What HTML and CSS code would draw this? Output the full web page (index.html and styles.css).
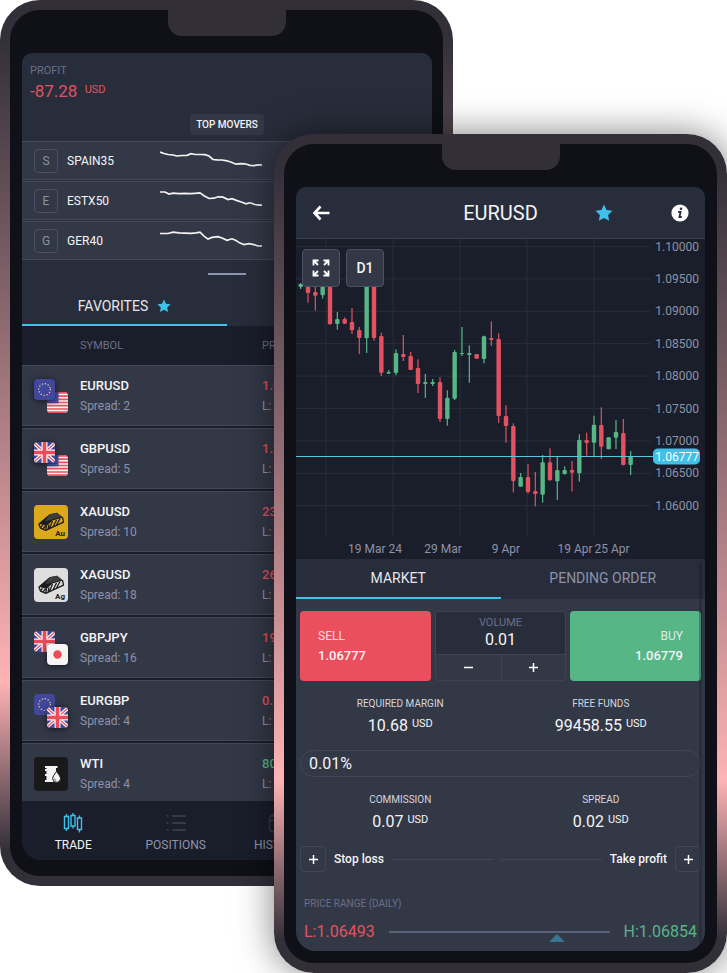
FILE: index.html
```html
<!DOCTYPE html>
<html lang="en">
<head>
<meta charset="utf-8">
<meta name="viewport" content="width=device-width, initial-scale=1">
<title>Mobile trading</title>
<link rel="stylesheet" href="styles.css">
</head>
<body>
<svg class="sprite" aria-hidden="true">
  <symbol id="star" viewBox="0 0 24 24"><path d="M12 .8l3.400 7.200 7.800 1-5.700 5.500 1.400 7.900L12 18.600l-6.900 3.800 1.400-7.900L.8 9l7.800-1z"/></symbol>
  <symbol id="eu" viewBox="0 0 21 21"><rect width="21" height="21" rx="4" fill="#41479b"/><circle cx="10.500" cy="10.500" r="5.800" fill="none" stroke="#e8d592" stroke-width="1.300" stroke-linecap="round" stroke-dasharray=".2 2.836"/></symbol>
  <symbol id="us" viewBox="0 0 21 21"><clipPath id="c-us"><rect width="21" height="21" rx="4"/></clipPath><g clip-path="url(#c-us)"><path fill="#f5f5f5" d="M0 0h21v21H0z"/><path stroke="#e9505e" stroke-width="1.700" d="M0 .8h21M0 4.050h21M0 7.300h21M0 10.500h21M0 13.700h21M0 17h21M0 20.200h21"/><path fill="#41479b" d="M0 0h11.500v11.300H0z"/><path stroke="#8a8ec8" stroke-width=".7" stroke-dasharray=".8 1.500" d="M1 2h10M2 4.500h9M1 7h10M2 9.500h9"/></g></symbol>
  <symbol id="uk" viewBox="0 0 21 21"><clipPath id="c-uk"><rect width="21" height="21" rx="4"/></clipPath><g clip-path="url(#c-uk)"><path fill="#41479b" d="M0 0h21v21H0z"/><path stroke="#f5f5f5" stroke-width="3.600" d="M0 1l21 19M21 1L0 20"/><path stroke="#ec4c5a" stroke-width="1.200" d="M0 1l21 19M21 1L0 20"/><path stroke="#f5f5f5" stroke-width="6" d="M10.500 0v21M0 10.500h21"/><path stroke="#ec4c5a" stroke-width="3.600" d="M10.500 0v21M0 10.500h21"/></g></symbol>
  <symbol id="jp" viewBox="0 0 21 21"><rect width="21" height="21" rx="4" fill="#f5f5f5"/><circle cx="10.500" cy="10.500" r="4.200" fill="#ec4c5a"/></symbol>
  <symbol id="ingot" viewBox="0 0 34 34"><path fill="#1c1c1c" d="M4.500 18.500L15.500 9.300l7.500-1.500 6 4.700-10.500 3-6 5.500z"/><path fill="#3d3d3d" d="M15.500 9.300l7.500-1.500 5 4-10 2.700-7 2z"/><path fill="none" stroke="#1c1c1c" stroke-width="1.300" stroke-linejoin="round" d="M4.800 18.500l1.700 4.700 5.200 2.200 17.800-8.200-1-5M12.500 20.500l-.8 4.900M6.500 23.200l2-3M9 24l2.500-3M15.500 23.500l3-7.500M19 22l3.500-7M22.500 20l3.500-6.500M14 24.500l1-5"/></symbol>
  <symbol id="barrel" viewBox="0 0 34 34"><rect width="34" height="34" rx="4" fill="#191919"/><path fill="#f3f3f3" d="M11 9h12.500v2H22v3h1l-3.500 5c-1.500 3 0 5.500 1.500 6H11v-2h1.500v-4H11v-2h1.500v-3H11v-2h1.500v-1H11z"/><path fill="#f3f3f3" stroke="#191919" stroke-width="1" d="M22.600 14.500c2.200 3 3.900 5 3.900 7a3.900 3.900 0 0 1-7.800 0c0-2 1.700-4 3.900-7z"/><path fill="none" stroke="#555" stroke-width=".8" d="M20.500 21.500a2.200 2.200 0 0 0 2 2.200"/></symbol>
</svg>

<main class="stage">
  <section class="phone phone-back" aria-label="Watchlist">
    <div class="body">
      <div class="notch"></div>
      <div class="screen">
        <header class="account">
          <p class="caption">PROFIT</p>
          <p class="profit">-87.28 <sup>USD</sup></p>
          <button class="movers-button" type="button">TOP MOVERS</button>
        </header>
        <ul class="movers">
          <li><span class="tile">S</span><span class="mover-name">SPAIN35</span><svg class="spark" viewBox="0 0 102 24"><path d="M0 3l4 1.500 4 1 5 .5 4 1 5-.5 5-.2 4-1.600 4 .8h6l4 .2 4 1.300 4 3.500 4 .3 5 .2 5 .8 5 1.700 4 1.700 4-.6 5 .2 5 1.500 4 .4 4-.8 5 .1"/></svg></li>
          <li><span class="tile">E</span><span class="mover-name">ESTX50</span><svg class="spark" viewBox="0 0 102 24"><path d="M0 3h5l4 2 4-.9 6 .6 6-.4 5 .3 5-.3 5-.4 4 2.800 5 2.800 5-.3 4-1.400 5 .4 5 2.400 4-1 5 2 5 1.700 4 1.500 4-1 5 1.700 4 .6h3"/></svg></li>
          <li><span class="tile">G</span><span class="mover-name">GER40</span><svg class="spark" viewBox="0 0 102 24"><path d="M0 4.500h8l5-1.300 6 .6 6 .3 6 .3 5-.5 4-.8 4 4 4 3 4-1.700 6-.7 4 1.300 5 2.300 5-1.500 4 1.700 4 2.600 4 1.500 5-1 5 1 4 1.400h4"/></svg></li>
        </ul>
        <div class="handle"></div>
        <nav class="tabs tabs-list">
          <button class="tab active" type="button">FAVORITES <svg class="star-small"><use href="#star"/></svg></button>
          <button class="tab" type="button">ALL SYMBOLS</button>
        </nav>
        <table class="quotes">
          <thead><tr><th></th><th>SYMBOL</th><th>PRICE</th></tr></thead>
          <tbody>
            <tr><td><svg class="pair" viewBox="0 0 34 34"><use href="#us" x="13" y="13" width="21" height="21"/><use class="lift" href="#eu" width="21" height="21"/></svg></td><td><b>EURUSD</b><small>Spread: 2</small></td><td><b class="down">1.06777</b><small>L: 1.06493</small></td></tr>
            <tr><td><svg class="pair" viewBox="0 0 34 34"><use href="#us" x="13" y="13" width="21" height="21"/><use class="lift" href="#uk" width="21" height="21"/></svg></td><td><b>GBPUSD</b><small>Spread: 5</small></td><td><b class="down">1.24120</b><small>L: 1.23870</small></td></tr>
            <tr><td><svg class="pair" viewBox="0 0 34 34"><rect width="34" height="34" rx="4" fill="#dca91c"/><use href="#ingot"/><text class="metal" x="31" y="31">Au</text></svg></td><td><b>XAUUSD</b><small>Spread: 10</small></td><td><b class="down">2319.40</b><small>L: 2305.10</small></td></tr>
            <tr><td><svg class="pair" viewBox="0 0 34 34"><rect width="34" height="34" rx="4" fill="#dedede"/><use href="#ingot"/><text class="metal" x="31" y="31">Ag</text></svg></td><td><b>XAGUSD</b><small>Spread: 18</small></td><td><b class="down">26.915</b><small>L: 26.702</small></td></tr>
            <tr><td><svg class="pair" viewBox="0 0 34 34"><use href="#uk" width="21" height="21"/><use class="lift" href="#jp" x="13" y="13" width="21" height="21"/></svg></td><td><b>GBPJPY</b><small>Spread: 16</small></td><td><b class="down">192.110</b><small>L: 191.840</small></td></tr>
            <tr><td><svg class="pair" viewBox="0 0 34 34"><use href="#eu" width="21" height="21"/><use class="lift" href="#uk" x="13" y="13" width="21" height="21"/></svg></td><td><b>EURGBP</b><small>Spread: 4</small></td><td><b class="down">0.86010</b><small>L: 0.85890</small></td></tr>
            <tr><td><svg class="pair" viewBox="0 0 34 34"><use href="#barrel"/></svg></td><td><b>WTI</b><small>Spread: 4</small></td><td><b class="up">80.42</b><small>L: 79.95</small></td></tr>
          </tbody>
        </table>
        <nav class="bottom-nav">
          <a class="current" href="#trade"><svg viewBox="0 0 20 20"><path d="M3.500 1v2.500M3.500 15.500V18M10 0v2.500M10 13v2.500M16.500 2.500V5M16.500 16.500V19.500"/><path d="M1.500 3.500h4v12h-4zM8 2.500h4V13H8zM14.500 5h4v11.500h-4z"/></svg>TRADE</a>
          <a href="#positions"><svg class="dim" viewBox="0 0 20 20"><path stroke-width="2.200" stroke-linecap="round" d="M7 3h12M7 10h12M7 17h12M1.500 3h.1M1.500 10h.1M1.500 17h.1"/></svg>POSITIONS</a>
          <a href="#history"><svg class="dim" viewBox="0 0 20 20"><path d="M4.500 2.500h11a3 3 0 0 1 3 3v10a3 3 0 0 1-3 3h-11a3 3 0 0 1-3-3v-10a3 3 0 0 1 3-3zM1.500 7.500h17M5.500 0v4M14.500 0v4"/></svg>HISTORY</a>
          <a href="#more"><svg class="dim" viewBox="0 0 20 20"><path d="M2 4h16M2 10h16M2 16h16"/></svg>MORE</a>
        </nav>
      </div>
    </div>
  </section>

  <section class="phone phone-front" aria-label="Order ticket">
    <div class="body">
      <div class="notch"></div>
      <div class="screen">
        <header class="top-bar">
          <button class="icon-button back" type="button" aria-label="Back"><svg viewBox="0 0 18 18"><path fill="none" stroke="#fff" stroke-width="2.600" d="M8.500 2.500L2.500 9l6 6.500M2.500 9h15"/></svg></button>
          <h1>EURUSD</h1>
          <button class="icon-button favorite" type="button" aria-label="Favorite"><svg><use href="#star"/></svg></button>
          <button class="icon-button info" type="button" aria-label="Info"><svg viewBox="0 0 18 18"><circle cx="9" cy="9" r="8.600" fill="#fff"/><circle cx="10" cy="4.800" r="1.300" fill="#282d3b"/><path fill="none" stroke="#282d3b" stroke-width="1.800" d="M7 7.800h2.600L8.400 13h2.400"/></svg></button>
        </header>
        <div class="chart-box">
          <svg class="chart" id="chart" viewBox="0 0 409 320" role="img" aria-label="EURUSD daily candles"></svg>
          <div class="chart-tools">
            <button type="button" aria-label="Full screen"><svg viewBox="0 0 18 18"><path d="M1.500 6.500v-5h5M11.500 1.500h5v5M16.500 11.500v5h-5M6.500 16.500h-5v-5M1.500 1.500L6 6M16.500 1.500L12 6M16.500 16.500L12 12M1.500 16.500L6 12"/></svg></button>
            <button type="button">D1</button>
          </div>
        </div>
        <div class="ticket">
          <nav class="tabs">
            <button class="tab active" type="button">MARKET</button>
            <button class="tab" type="button">PENDING ORDER</button>
          </nav>
          <form class="order">
            <div class="trade-row">
              <button class="side sell" type="button"><span>SELL</span><strong>1.06777</strong></button>
              <div class="volume">
                <div class="volume-field"><label for="volume">VOLUME</label><input id="volume" type="text" value="0.01"></div>
                <div class="steps"><button type="button" aria-label="Less"><svg viewBox="0 0 9 9"><path d="M0 4.500h9"/></svg></button><button type="button" aria-label="More"><svg viewBox="0 0 9 9"><path d="M0 4.500h9M4.500 0v9"/></svg></button></div>
              </div>
              <button class="side buy" type="button"><span>BUY</span><strong>1.06779</strong></button>
            </div>
            <dl class="stats">
              <div><dt>REQUIRED MARGIN</dt><dd>10.68 <sup>USD</sup></dd></div>
              <div><dt>FREE FUNDS</dt><dd>99458.55 <sup>USD</sup></dd></div>
            </dl>
            <div class="usage">0.01%</div>
            <dl class="stats">
              <div><dt>COMMISSION</dt><dd>0.07 <sup>USD</sup></dd></div>
              <div><dt>SPREAD</dt><dd>0.02 <sup>USD</sup></dd></div>
            </dl>
            <div class="limits">
              <button id="sl" type="button" aria-label="Add stop loss"><svg viewBox="0 0 9 9"><path d="M0 4.500h9M4.500 0v9"/></svg></button>
              <label for="sl">Stop loss</label>
              <hr><hr>
              <label for="tp">Take profit</label>
              <button id="tp" type="button" aria-label="Add take profit"><svg viewBox="0 0 9 9"><path d="M0 4.500h9M4.500 0v9"/></svg></button>
            </div>
            <p class="range-title">PRICE RANGE (DAILY)</p>
            <div class="range">
              <span class="down">L:1.06493</span>
              <div class="range-track"><svg class="range-mark" viewBox="0 0 14 8"><path d="M7 0l7 7v1H0V7z"/></svg></div>
              <span class="up">H:1.06854</span>
            </div>
          </form>
        </div>
      </div>
    </div>
  </section>
</main>
<script src="chart.js"></script>
</body>
</html>
```
FILE: chart.js
```js
// Each candle: direction, wick top, body top, body bottom, wick bottom (three units per pixel).
const candles = [
  ['u', 39, 42, 51, 57], ['d', 30, 36, 69, 98], ['d', 50, 66, 77, 122], ['u', 40, 48, 76, 86],
  ['d', 30, 36, 163, 164], ['u', 126, 147, 162, 179], ['d', 142, 147, 161, 162], ['d', 114, 156, 181, 192],
  ['d', 171, 180, 204, 252], ['u', 30, 36, 205, 249], ['d', 30, 36, 204, 212], ['d', 188, 198, 308, 318],
  ['u', 300, 306, 311, 311], ['u', 238, 249, 309, 316], ['d', 195, 252, 261, 273], ['d', 246, 258, 300, 300],
  ['d', 268, 294, 342, 369], ['u', 312, 336, 342, 384], ['u', 327, 336, 342, 348], ['d', 322, 336, 447, 456],
  ['u', 361, 383, 447, 467], ['u', 240, 246, 386, 390], ['u', 171, 249, 252, 258], ['u', 226, 249, 255, 338],
  ['d', 252, 252, 266, 266], ['u', 197, 199, 267, 280], ['d', 154, 204, 210, 228], ['d', 190, 207, 438, 459],
  ['d', 406, 438, 468, 518], ['d', 460, 468, 633, 667], ['u', 609, 621, 650, 650], ['d', 582, 621, 666, 671],
  ['d', 606, 663, 672, 709], ['u', 555, 577, 674, 698], ['d', 535, 577, 631, 632], ['u', 560, 600, 634, 690],
  ['u', 589, 600, 612, 614], ['d', 573, 600, 608, 664], ['u', 493, 510, 610, 635], ['d', 488, 510, 519, 557],
  ['u', 437, 464, 518, 560], ['d', 412, 465, 530, 567], ['u', 502, 502, 538, 538], ['u', 450, 486, 503, 537],
  ['d', 447, 489, 585, 586], ['u', 543, 560, 585, 615]
];
const prices = ['1.10000', '1.09500', '1.09000', '1.08500', '1.08000', '1.07500', '1.07000', '1.06500', '1.06000'];
const dates = [[79, '19 Mar 24'], [147, '29 Mar'], [210, '9 Apr'], [279, '19 Apr'], [316, '25 Apr']];

const toY = v => 31 + v / 3;
let svg = '';
prices.forEach((price, i) => {
  const y = 7.5 + i * 32.4;
  svg += `<path class="grid-line" d="M0 ${y}H354"/><text class="axis end" x="403" y="${y + 4}">${price}</text>`;
});
[30, 97, 164, 231, 298].forEach(x => { svg += `<path class="grid-line" d="M${x} 0V298"/>`; });
candles.forEach(([dir, high, top, bottom, low], i) => {
  const x = 4.67 + i * 7.333;
  svg += `<g class="candle ${dir}"><rect x="${x - 0.6}" y="${toY(high)}" width="1.2" height="${(low - high) / 3}"/>` +
    `<rect x="${x - 2.2}" y="${toY(top)}" width="4.4" height="${(bottom - top) / 3}" rx="1"/></g>`;
});
dates.forEach(([x, label]) => { svg += `<text class="axis middle" x="${x}" y="314">${label}</text>`; });
svg += '<path class="price-line" d="M0 217.5H358"/><rect class="price-tag" x="357" y="209.500" width="47" height="16" rx="5"/>' +
  '<text class="axis end price-now" x="403" y="222">1.06777</text>';
document.getElementById('chart').innerHTML = svg;
```
FILE: styles.css
```css
* { box-sizing: border-box; }
:root {
  --shell: #0f1018;
  --bar: #282d3b;
  --panel: #333847;
  --deep: #1a1e2b;
  --line: #434959;
  --muted: #8e92aa;
  --faint: #6a6f88;
  --red: #e25260;
  --green: #56b685;
  --cyan: #3fc1ea;
  --text: #f4f4f6;
}
body { margin: 0; background: #fff; color: var(--text); font-family: Roboto, "Liberation Sans", sans-serif; font-size: 12px; }
p, h1, ul, dl, dd, form { margin: 0; padding: 0; }
ul { list-style: none; }
button, input { font: inherit; color: inherit; background: none; border: 0; padding: 0; margin: 0; }
svg { display: block; }
.sprite { position: absolute; width: 0; height: 0; }

.stage { display: grid; align-items: start; overflow: hidden; }
.phone {
  isolation: isolate;
  grid-area: 1 / 1;
  padding: 10px;
  border-radius: 40px;
  background: linear-gradient(#322f39 4%, #ffb3b5 77%, #322f39 96%);
}
.phone-back { margin-right: 274px; }
.phone-front { margin: 134px 0 0 274px; box-shadow: 0 0 36px rgba(0, 0, 0, .5); }
.body { position: relative; padding: 43px 12px 16px; border-radius: 30px; background: var(--shell); }
.phone-back .body { padding-right: 11px; }
.phone-front .body { padding-bottom: 12px; }
.notch { position: absolute; top: -1px; left: 50%; width: 118px; height: 27px; margin-left: -59px; border-radius: 0 0 14px 14px; background: #322f39; }
.screen { overflow: hidden; border-radius: 10px 10px 20px 20px; background: var(--bar); }

.down { color: var(--red); }
.up { color: var(--green); }
sup { font-size: 11px; line-height: 1; vertical-align: 4px; }

.account { display: flex; flex-direction: column; padding: 11px 8px 6px; }
.caption { color: var(--faint); font-size: 11px; line-height: 14px; }
.profit { margin-top: 3px; color: var(--red); font-size: 17px; line-height: 20px; }
.profit sup { margin-left: 3px; }
.movers-button { align-self: center; margin-top: 13px; padding: 0 6px; border-radius: 4px; background: var(--panel); font-size: 10px; font-weight: 500; line-height: 21px; }
.movers { display: grid; gap: 1px; }
.movers li { display: flex; align-items: center; height: 39px; padding-left: 12px; border: solid var(--line); border-width: 1px 0; background: var(--panel); }
.tile { width: 24px; height: 24px; border: 1px solid #4b5063; border-radius: 4px; color: #8b909c; font-size: 12px; line-height: 22px; text-align: center; }
.mover-name { width: 93px; margin-left: 9px; font-size: 12px; }
.spark { width: 102px; height: 24px; fill: none; stroke: #f4f4f6; stroke-width: 1.7; }
.handle { width: 38px; height: 2px; margin: 13px auto 12px; background: #9095ae; }

.tabs { display: grid; grid-template-columns: 1fr 1fr; background: var(--bar); }
.tab { display: flex; align-items: center; justify-content: center; height: 40px; border-bottom: 2px solid transparent; color: var(--muted); font-size: 14px; }
.tabs-list .tab { height: 39px; }
.tab.active { border-color: var(--cyan); color: #e6e6ea; }
.star-small { width: 14px; height: 14px; margin-left: 9px; fill: var(--cyan); }

.quotes { width: 100%; border-spacing: 0 2px; background: var(--deep); table-layout: fixed; }
.quotes th { height: 35px; padding: 0; color: var(--faint); font-size: 11px; font-weight: 400; text-align: left; }
.quotes th:first-child { width: 58px; }
.quotes th:nth-child(2) { width: 182px; }
.quotes td { height: 61px; padding: 0; border: solid var(--line); border-width: 1px 0; background: var(--panel); }
.quotes td:first-child { padding-left: 12px; }
.quotes b { display: block; font-size: 13px; font-weight: 500; line-height: 20px; }
.quotes small { display: block; color: var(--muted); font-size: 12px; line-height: 20px; }
.pair { width: 34px; height: 34px; overflow: visible; }
.lift { filter: drop-shadow(0 1px 3px rgba(0, 0, 0, .6)); }
.metal { fill: #222; font-size: 8px; font-weight: 700; text-anchor: end; }

.bottom-nav { position: relative; display: grid; grid-template-columns: repeat(4, 1fr); height: 59px; margin-top: -5px; background: var(--deep); }
.bottom-nav a { display: flex; flex-direction: column; align-items: center; gap: 3px; padding-top: 12px; color: var(--muted); font-size: 12px; line-height: 18px; text-decoration: none; }
.bottom-nav a.current { color: var(--text); }
.bottom-nav svg { width: 20px; height: 20px; fill: none; stroke: var(--cyan); stroke-width: 1.4; }
.bottom-nav .dim { stroke: #383a4a; }

.top-bar { display: grid; grid-template-columns: 50px 1fr 50px; align-items: center; height: 52px; border-bottom: 1px solid #3c4158; }
.top-bar h1 { grid-area: 1 / 1 / 2 / 4; font-size: 20px; font-weight: 400; text-align: center; }
.icon-button { display: flex; grid-row: 1; justify-content: center; z-index: 1; }
.icon-button svg { width: 18px; height: 18px; fill: var(--cyan); }
.back { grid-column: 1; }
.favorite { grid-column: 2; justify-self: end; margin-right: 42px; }
.info { grid-column: 3; }

.chart-box { position: relative; background: var(--deep); }
.chart { width: 100%; height: auto; }
.chart-tools { position: absolute; top: 10px; left: 6px; display: flex; gap: 6px; }
.chart-tools button { display: grid; place-items: center; width: 38px; height: 38px; border: 1px solid #4b5168; border-radius: 4px; background: var(--panel); font-size: 14px; font-weight: 500; }
.chart-tools svg { width: 18px; height: 18px; fill: none; stroke: #fff; stroke-width: 1.8; }
.grid-line { stroke: #262b38; stroke-width: 1.2; }
.axis { fill: var(--muted); font-size: 12px; }
.end { text-anchor: end; }
.middle { text-anchor: middle; }
.candle.u { fill: var(--green); }
.candle.d { fill: var(--red); }
.price-line { stroke: #5cc5dc; stroke-width: 1; }
.price-tag { fill: var(--cyan); }
.price-now { fill: #fff; }

.ticket { position: relative; background: var(--panel); }
.ticket::after { content: ""; position: absolute; top: 3px; right: 3px; bottom: 0; width: 3px; background: rgba(20, 24, 36, .3); pointer-events: none; }
.order { padding: 12px 4px 7px; }
.trade-row { display: grid; grid-template-columns: repeat(3, 1fr); gap: 4px; height: 70px; }
.side { display: flex; flex-direction: column; justify-content: center; padding: 0 18px; border-radius: 4px; }
.side span { color: rgba(255, 255, 255, .8); font-size: 12px; line-height: 20px; }
.side strong { font-size: 13px; font-weight: 500; line-height: 20px; }
.sell { align-items: flex-start; background: #eb4f5d; }
.buy { align-items: flex-end; background: var(--green); }
.volume { display: flex; flex-direction: column; overflow: hidden; border: 1px solid #3f4454; border-radius: 4px; }
.volume-field { display: flex; flex-direction: column; align-items: center; height: 42px; padding-top: 4px; background: var(--bar); }
.volume-field label { color: var(--faint); font-size: 11px; line-height: 14px; }
.volume-field input { width: 100%; font-size: 16px; line-height: 20px; text-align: center; }
.steps { display: grid; flex: 1; grid-template-columns: 1fr 1fr; border-top: 1px solid #3f4454; }
.steps button { display: grid; place-items: center; }
.steps button + button { border-left: 1px solid #3f4454; }
.steps svg, .limits svg { width: 9px; height: 9px; stroke: #fff; stroke-width: 1.5; }

.stats { display: grid; grid-template-columns: 1fr 1fr; margin-top: 16px; text-align: center; }
.stats dt { color: #d4d6de; font-size: 10px; line-height: 14px; }
.stats dd { margin-top: 3px; font-size: 16px; line-height: 24px; }
.usage { margin-top: 12px; padding-left: 8px; border: 1px solid #414757; border-radius: 14px; font-size: 16px; line-height: 25px; }
.limits { display: flex; align-items: center; margin-top: 12px; font-size: 12px; font-weight: 500; }
.limits button { display: grid; place-items: center; width: 26px; height: 26px; border: 1px solid #414757; border-radius: 4px; }
.limits label { margin: 0 8px; }
.limits hr { flex: 1; height: 1px; margin: 0; border: 0; background: #414757; }
.limits hr + hr { margin-left: 8px; }
.range-title { margin: 25px 4px 0; color: var(--faint); font-size: 10px; line-height: 14px; }
.range { display: flex; align-items: center; margin: 9px 4px 0; font-size: 16px; line-height: 24px; }
.range-track { position: relative; flex: 1; height: 2px; margin: 0 14px; background: #5a6075; }
.range-mark { position: absolute; top: 3px; left: 73%; width: 14px; height: 8px; fill: #39758e; }
```
